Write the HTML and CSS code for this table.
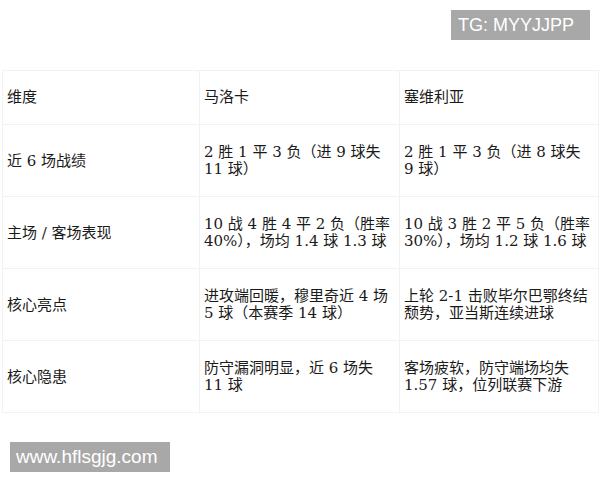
FILE: index.html
```html
<!DOCTYPE html>
<html lang="zh-CN">
<head>
<meta charset="utf-8">
<title>对比</title>
<link rel="stylesheet" href="styles.css">
</head>
<body>
<div class="top">
  <span class="badge badge-tg">TG: MYYJJPP</span>
</div>
<table class="stats">
  <colgroup>
    <col class="c1"><col class="c2"><col class="c3">
  </colgroup>
  <thead>
    <tr><th>维度</th><th>马洛卡</th><th>塞维利亚</th></tr>
  </thead>
  <tbody>
    <tr><td>近 6 场战绩</td><td>2 胜 1 平 3 负（进 9 球失 11 球）</td><td>2 胜 1 平 3 负（进 8 球失 9 球）</td></tr>
    <tr><td>主场 / 客场表现</td><td>10 战 4 胜 4 平 2 负（胜率 40%），场均 1.4 球 1.3 球</td><td>10 战 3 胜 2 平 5 负（胜率 30%），场均 1.2 球 1.6 球</td></tr>
    <tr><td>核心亮点</td><td>进攻端回暖，穆里奇近 4 场 5 球（本赛季 14 球）</td><td>上轮 2-1 击败毕尔巴鄂终结颓势，亚当斯连续进球</td></tr>
    <tr><td>核心隐患</td><td>防守漏洞明显，近 6 场失 11 球</td><td>客场疲软，防守端场均失 1.57 球，位列联赛下游</td></tr>
  </tbody>
</table>
<div class="bottom">
  <span class="badge badge-site">www.hflsgjg.com</span>
</div>
</body>
</html>
```

FILE: styles.css
```css
html, body {
  margin: 0;
  padding: 0;
  background: #ffffff;
}
body {
  width: 600px;
  height: 480px;
  overflow: hidden;
}
.top {
  display: flex;
  justify-content: flex-end;
  padding: 10px 10px 0 0;
}
.badge {
  display: block;
  box-sizing: border-box;
  height: 30px;
  background: #a8a8a8;
  color: #ffffff;
  font-family: "Liberation Sans", Arial, sans-serif;
  line-height: 30px;
  white-space: nowrap;
}
.badge-tg {
  width: 139px;
  padding-left: 7px;
  font-size: 18px;
}
.badge-site {
  width: 160px;
  padding-left: 6px;
  font-size: 19px;
}
.stats {
  margin: 30px 0 0 2px;
  width: 596px;
  table-layout: fixed;
  border-collapse: collapse;
  font-family: "DejaVu Serif", "Noto Sans CJK SC", serif;
  font-size: 15px;
  line-height: 17px;
  color: #1a1a1a;
}
.c1 { width: 197px; }
.c2 { width: 200px; }
.c3 { width: 199px; }
.stats th,
.stats td {
  border: 1px solid #f2f2f2;
  text-align: left;
  vertical-align: middle;
  font-weight: normal;
  padding: 18px 4px;
}
.stats td {
  padding-top: 19px;
  padding-bottom: 18px;
}
.bottom {
  display: flex;
  padding: 29px 0 0 10px;
}
```
